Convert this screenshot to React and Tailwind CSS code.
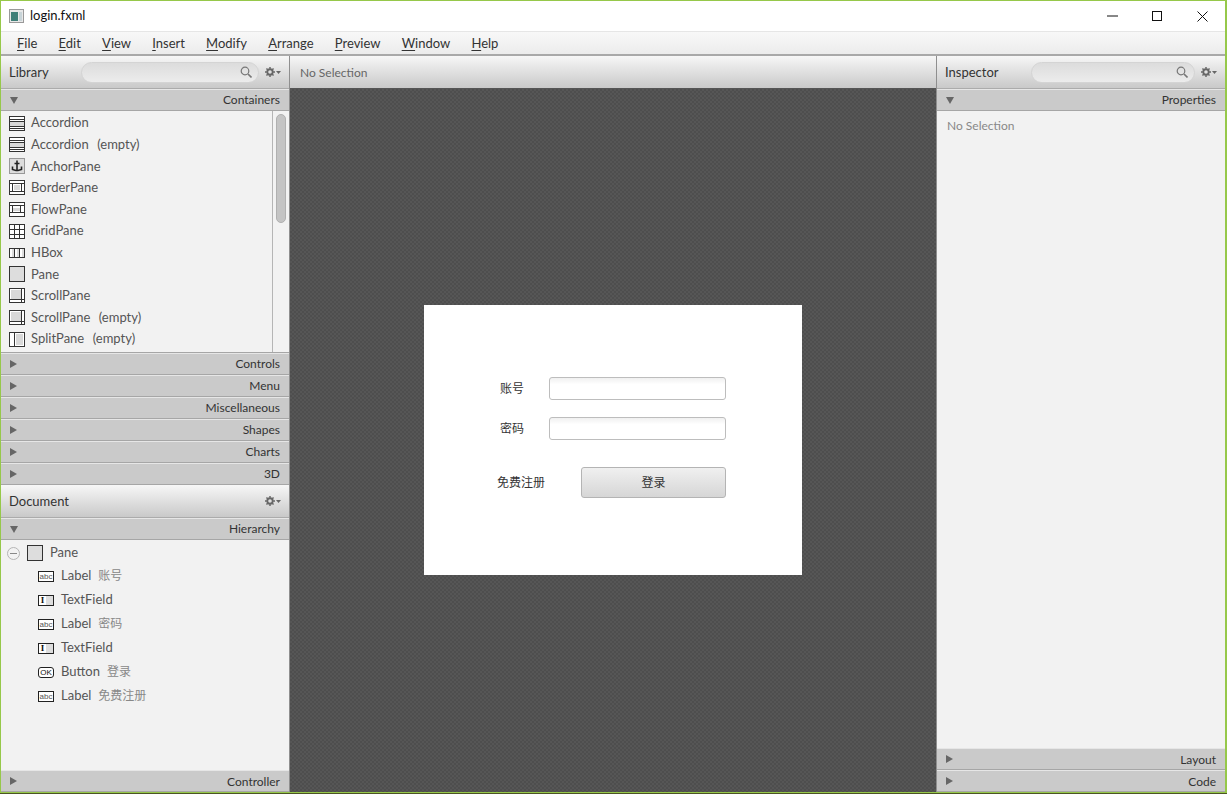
import React from "react";
const font = { fontFamily: 'Lato,"Noto Sans CJK SC",sans-serif' };

const Box = ({ children, w = 16, h = 15 }) => (
  <svg width={w} height={h} viewBox={`0 0 ${w} ${h}`} className="shrink-0" fill="none" stroke="#333" strokeWidth="1" shapeRendering="crispEdges">
    {children}
  </svg>
);
const icons = {
  accordion: (
    <Box>
      <rect x="0.5" y="0.5" width="15" height="14" fill="#fff" />
      <rect x="1" y="6" width="14" height="5" fill="#d8d8d8" stroke="none" />
      <path d="M0 3.5H16M0 5.5H16M0 10.5H16M0 12.5H16" />
    </Box>
  ),
  anchor: (
    <Box h={16}>
      <rect x="0.5" y="0.5" width="15" height="15" fill="#ddd" stroke="#999" />
      <path d="M8 2.5V13M5.5 5.5H10.5M3.5 8.5V11.5L7 12.5H9L12.5 11.5V8.5" strokeWidth="1.6" stroke="#222" fill="none" shapeRendering="auto" />
    </Box>
  ),
  border: (
    <Box>
      <rect x="0.5" y="0.5" width="15" height="14" fill="#fff" />
      <rect x="5" y="5" width="6" height="5" fill="#d8d8d8" stroke="none" />
      <path d="M0 3.5H16M0 11.5H16M3.5 3V12M12.5 3V12" />
    </Box>
  ),
  flow: (
    <Box>
      <rect x="0.5" y="0.5" width="15" height="14" fill="#fff" />
      <rect x="4" y="6" width="7" height="3" fill="#d8d8d8" stroke="none" />
      <path d="M0 3.5H16M0 10.5H16M3.5 3V11M11.5 3V11" />
    </Box>
  ),
  grid: (
    <Box>
      <rect x="0.5" y="0.5" width="15" height="14" fill="#fff" />
      <path d="M5.5 0V15M10.5 0V15M0 5.5H16M0 10.5H16" />
    </Box>
  ),
  hbox: (
    <Box h={10}>
      <rect x="0.5" y="0.5" width="15" height="9" fill="#ddd" />
      <path d="M5.5 0V10M10.5 0V10" />
      <path d="M1 1H3V9H1ZM6 1H8V9H6ZM11 1H13V9H11Z" fill="#fff" stroke="none" />
    </Box>
  ),
  pane: (
    <Box h={16}>
      <rect x="0.5" y="0.5" width="15" height="15" fill="#ddd" />
    </Box>
  ),
  scroll: (
    <Box>
      <rect x="0.5" y="0.5" width="15" height="14" fill="#fff" />
      <rect x="2" y="2" width="10" height="9" fill="#d8d8d8" stroke="none" />
      <path d="M12.5 0V15M0 11.5H16" />
    </Box>
  ),
  split: (
    <Box>
      <rect x="0.5" y="0.5" width="15" height="14" fill="#fff" />
      <rect x="7" y="2" width="7" height="11" fill="#d8d8d8" stroke="none" />
      <path d="M5.5 0V15" />
    </Box>
  ),
};

const iconFont = { fontFamily: '"Liberation Sans",sans-serif' };
const LabelIcon = () => (
  <span className="w-4 h-[11px] border border-[#222] bg-white text-[8px] leading-[9px] text-center text-[#555] shrink-0" style={iconFont}>abc</span>
);
const FieldIcon = () => (
  <span className="w-4 h-[11px] border border-[#222] bg-[#ddd] shrink-0 flex">
    <span className="w-[7px] h-full bg-white text-[#111] text-[9px] leading-[9px] text-center font-bold" style={{ fontFamily: '"Liberation Serif",serif' }}>I</span>
  </span>
);
const OkIcon = () => (
  <span className="w-4 h-[11px] border border-[#222] rounded-[3px] bg-white text-[8px] leading-[9px] text-center text-[#111] shrink-0" style={iconFont}>OK</span>
);

const Search = () => (
  <svg width="12" height="12" viewBox="0 0 12 12" fill="none" stroke="#777" strokeWidth="1.2" className="shrink-0">
    <circle cx="5" cy="5" r="3.8" />
    <path d="M8 8L11.5 11.5" strokeWidth="1.6" />
  </svg>
);
const Gear = () => (
  <span className="flex items-center gap-px shrink-0">
    <svg width="10" height="10" viewBox="0 0 11 11">
      <circle cx="5.5" cy="5.5" r="3" fill="none" stroke="#666" strokeWidth="2" />
      <path d="M5.5 0V2M5.5 9V11M0 5.5H2M9 5.5H11M1.6 1.6L3 3M8 8L9.4 9.4M1.6 9.4L3 8M8 3L9.4 1.6" stroke="#666" strokeWidth="1.6" />
    </svg>
    <svg width="5" height="3" viewBox="0 0 5 3"><path d="M0 0H5L2.5 3Z" fill="#666" /></svg>
  </span>
);
const Tri = ({ open }) =>
  open ? (
    <svg width="8" height="7" viewBox="0 0 8 7" className="shrink-0"><path d="M0 0H8L4 7Z" fill="#666" /></svg>
  ) : (
    <svg width="7" height="8" viewBox="0 0 7 8" className="shrink-0"><path d="M0 0V8L7 4Z" fill="#666" /></svg>
  );

const Section = ({ title, open, low }) => (
  <div className="h-[22px] shrink-0 flex items-center justify-between px-[9px] bg-[#cacaca] border-b border-[#a6a6a6] border-t border-t-[#e6e6e6] text-[12px] text-[#333]">
    <Tri open={open} />
    <span className={low ? "pt-px" : ""}>{title}</span>
  </div>
);

const PanelHead = ({ title, search = true, titleW, searchW }) => (
  <div className="h-[33px] shrink-0 flex items-center px-2 bg-gradient-to-b from-[#f7f7f7] to-[#c9c9c9] border-b border-[#ababab] text-[13px] text-[#333]">
    <span className="pt-[2px] shrink-0" style={{ width: titleW }}>{title}</span>
    {search ? (
      <div className="h-[21px] rounded-full border border-[#d4d4d4] bg-gradient-to-b from-[#dcdcdc] to-[#ececec] flex items-center justify-end pr-[6px] mr-[6px]" style={{ width: searchW }}>
        <Search />
      </div>
    ) : (
      <div className="grow" />
    )}
    <Gear />
  </div>
);

const lib = [
  ["accordion", "Accordion", ""],
  ["accordion", "Accordion", "(empty)"],
  ["anchor", "AnchorPane", ""],
  ["border", "BorderPane", ""],
  ["flow", "FlowPane", ""],
  ["grid", "GridPane", ""],
  ["hbox", "HBox", ""],
  ["pane", "Pane", ""],
  ["scroll", "ScrollPane", ""],
  ["scroll", "ScrollPane", "(empty)"],
  ["split", "SplitPane", "(empty)"],
];

const tree = [
  [LabelIcon, "Label", "账号"],
  [FieldIcon, "TextField", ""],
  [LabelIcon, "Label", "密码"],
  [FieldIcon, "TextField", ""],
  [OkIcon, "Button", "登录"],
  [LabelIcon, "Label", "免费注册"],
];

const menus = [
  ["F", "ile"],
  ["E", "dit"],
  ["V", "iew"],
  ["I", "nsert"],
  ["M", "odify"],
  ["A", "rrange"],
  ["P", "review"],
  ["W", "indow"],
  ["H", "elp"],
];

const Field = () => (
  <div className="w-[177px] h-[23px] rounded-[3px] border border-[#bdbdbd] bg-gradient-to-b from-[#f0f0f0] to-white to-30%" />
);

export default function App() {
  return (
    <div className="w-[1227px] h-[794px] overflow-hidden flex flex-col bg-[#4a5522]" style={font}>
      <div className="h-[793px] flex flex-col border-t border-l border-b border-r-2 border-[#96c84a] bg-white">
        {/* title bar */}
        <div className="h-[30px] shrink-0 flex items-center bg-white pl-2">
          <svg width="15" height="14" viewBox="0 0 15 14" className="shrink-0">
            <rect x="0.5" y="0.5" width="14" height="13" fill="#e8e8e8" stroke="#999" />
            <rect x="2" y="3" width="7" height="9" fill="#3f7f78" />
            <rect x="10" y="3" width="3" height="9" fill="#c8d4d8" />
          </svg>
          <span className="ml-[6px] text-[13px] text-[#111] grow">login.fxml</span>
          <svg width="11" height="2" viewBox="0 0 11 2" className="mr-[34px]"><path d="M0 1H11" stroke="#111" /></svg>
          <svg width="10" height="10" viewBox="0 0 10 10" className="mr-[35px]"><rect x="0.5" y="0.5" width="9" height="9" fill="none" stroke="#111" /></svg>
          <svg width="11" height="11" viewBox="0 0 11 11" className="mr-[17px]"><path d="M0.5 0.5L10.5 10.5M10.5 0.5L0.5 10.5" stroke="#111" /></svg>
        </div>
        {/* menu */}
        <div className="h-[25px] shrink-0 flex items-center gap-[21.2px] pl-4 pt-px bg-gradient-to-b from-[#f8f8f8] to-[#ececec] border-t border-[#e6e6e6] border-b-2 border-b-[#a9a9a9] text-[13px] text-[#333]">
          {menus.map(([a, b]) => (
            <span key={b}><span className="underline underline-offset-2">{a}</span>{b}</span>
          ))}
        </div>
        <div className="flex-1 min-h-0 flex">
          {/* left */}
          <div className="w-[288px] shrink-0 flex flex-col bg-[#f2f2f2]">
            <PanelHead title="Library" titleW={72} searchW={179} />
            <Section title="Containers" open />
            <div className="h-[242px] shrink-0 flex overflow-hidden border-b border-[#a6a6a6]">
              <div className="w-[271px] pl-2 pt-[1.4px]">
                {lib.map(([ic, t, s], i) => (
                  <div key={i} className="h-[21.6px] flex items-center gap-[6px] text-[13px] text-[#555] whitespace-pre">
                    <span className="w-4 flex justify-center shrink-0">{icons[ic]}</span>
                    <span>{t}</span>
                    {s && <span className="ml-[2.5px]">{s}</span>}
                  </div>
                ))}
              </div>
              <div className="w-[17px] border-l border-[#b5b5b5] pl-[3px] pt-[3px]">
                <div className="w-[10px] h-[109px] rounded-full bg-[#c4c4c4] border border-[#b0b0b0]" />
              </div>
            </div>
            {["Controls", "Menu", "Miscellaneous", "Shapes", "Charts", "3D"].map((t) => (
              <Section key={t} title={t} />
            ))}
            <PanelHead title="Document" search={false} />
            <Section title="Hierarchy" open />
            <div className="flex-1 min-h-0 pt-[2px]">
              <div className="h-[22px] flex items-center pl-[6px] text-[13px] text-[#555]">
                <span className="w-[13px] h-[13px] rounded-full border border-[#b5b5b5] flex items-center justify-center shrink-0">
                  <span className="w-[7px] h-px bg-[#888]" />
                </span>
                <span className="ml-[7px] flex">{icons.pane}</span>
                <span className="ml-[7px]">Pane</span>
              </div>
              {tree.map(([I, a, b], i) => (
                <div key={i} className="h-6 flex items-center pl-[37px] text-[13px] text-[#555]">
                  <I />
                  <span className="ml-[7px]">{a}</span>
                  {b && <span className="ml-[7px] text-[12px] text-[#888]">{b}</span>}
                </div>
              ))}
            </div>
            <Section title="Controller" low />
          </div>
          {/* center */}
          <div className="w-[648px] shrink-0 flex flex-col border-l border-r border-[#8f8f8f]">
            <div className="h-[33px] shrink-0 flex items-center pl-[10px] pt-[2px] bg-gradient-to-b from-[#f7f7f7] to-[#c9c9c9] border-b border-[#555] text-[12px] text-[#666]">
              No Selection
            </div>
            <div className="flex-1 min-h-0 flex items-center justify-center bg-[#525252] bg-[repeating-conic-gradient(#4e4e4e_0_25%,#565656_0_50%)] bg-[length:4px_4px] pb-[2px]">
              <div className="w-[378px] h-[270px] bg-white pt-[72px] pl-[72px] text-[12px] text-[#333]">
                <div className="flex items-center h-[23px]">
                  <span className="w-[24px] ml-[4px] pt-[2px] text-center">账号</span>
                  <span className="ml-[25px]"><Field /></span>
                </div>
                <div className="flex items-center h-[23px] mt-[17px]">
                  <span className="w-[24px] ml-[4px] pt-[2px] text-center">密码</span>
                  <span className="ml-[25px]"><Field /></span>
                </div>
                <div className="flex items-center h-[31px] mt-[27px]">
                  <span className="w-[48px] ml-px pt-[2px]">免费注册</span>
                  <button className="ml-[36px] w-[145px] h-[31px] pt-[2px] rounded-[3px] border border-[#b4b4b4] bg-gradient-to-b from-[#f0f0f0] to-[#d6d6d6] text-[12px] text-[#333]">登录</button>
                </div>
              </div>
            </div>
          </div>
          {/* right */}
          <div className="flex-1 min-w-0 flex flex-col bg-[#f2f2f2]">
            <PanelHead title="Inspector" titleW={86} searchW={165} />
            <Section title="Properties" open />
            <div className="flex-1 pl-[10px] pt-[6px] text-[12px] text-[#888]">No Selection</div>
            <Section title="Layout" low />
            <Section title="Code" low />
          </div>
        </div>
      </div>
    </div>
  );
}
